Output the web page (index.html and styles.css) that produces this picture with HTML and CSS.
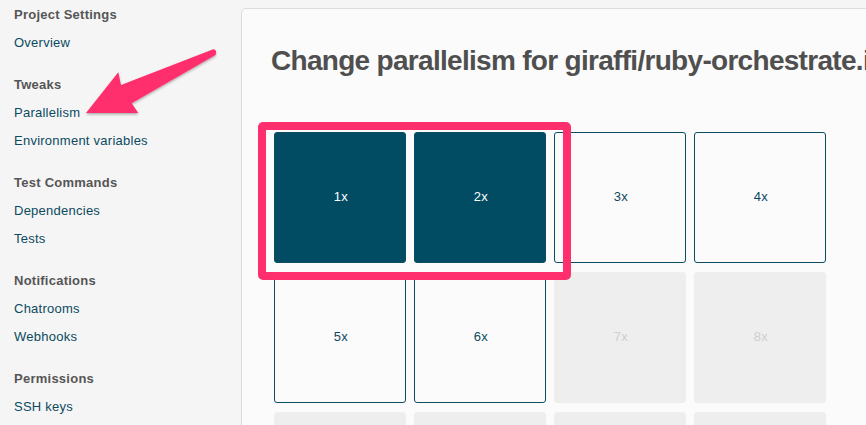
FILE: index.html
```html
<!DOCTYPE html>
<html>
<head>
<meta charset="utf-8">
<link rel="stylesheet" href="styles.css">
</head>
<body>
<div class="page">
  <nav class="sidebar">
    <div class="group">
      <div class="heading">Project Settings</div>
      <a class="link">Overview</a>
    </div>
    <div class="group">
      <div class="heading">Tweaks</div>
      <a class="link">Parallelism</a>
      <a class="link">Environment variables</a>
    </div>
    <div class="group">
      <div class="heading">Test Commands</div>
      <a class="link">Dependencies</a>
      <a class="link">Tests</a>
    </div>
    <div class="group">
      <div class="heading">Notifications</div>
      <a class="link">Chatrooms</a>
      <a class="link">Webhooks</a>
    </div>
    <div class="group">
      <div class="heading">Permissions</div>
      <a class="link">SSH keys</a>
    </div>
  </nav>
  <main class="main">
    <section class="panel">
      <h1 class="title">Change parallelism for giraffi/ruby-orchestrate.io</h1>
      <div class="grid">
        <div class="tile active">1x</div>
        <div class="tile active">2x</div>
        <div class="tile">3x</div>
        <div class="tile">4x</div>
        <div class="tile">5x</div>
        <div class="tile">6x</div>
        <div class="tile disabled">7x</div>
        <div class="tile disabled">8x</div>
        <div class="tile disabled">9x</div>
        <div class="tile disabled">10x</div>
        <div class="tile disabled">11x</div>
        <div class="tile disabled">12x</div>
      </div>
      <div class="highlight"></div>
    </section>
  </main>
</div>
<svg class="arrow" width="240" height="130" viewBox="0 0 240 130">
  <defs>
    <filter id="sh" x="-10%" y="-10%" width="120%" height="130%">
      <feDropShadow dx="0" dy="1.5" stdDeviation="1.2" flood-color="#000" flood-opacity="0.3"/>
    </filter>
  </defs>
  <path filter="url(#sh)" fill="#ff2f6d" d="M86 113 L118.3 72.3 L121 85 L213.3 49.3 Q217.5 50 215.5 55 L131.7 103.3 L138.3 113 Z"/>
</svg>
</body>
</html>
```
FILE: styles.css
```css
html, body {
  margin: 0;
  padding: 0;
  background: #f5f5f5;
  overflow: hidden;
  width: 866px;
  height: 425px;
}
.page {
  display: flex;
  font-family: "Liberation Sans", Arial, sans-serif;
}
.sidebar {
  width: 241px;
  flex: none;
  padding: 1px 0 0 14px;
  box-sizing: border-box;
}
.group {
  display: flex;
  flex-direction: column;
  margin-bottom: 14px;
}
.heading, .link {
  height: 28px;
  line-height: 28px;
  font-size: 13px;
  letter-spacing: 0.25px;
}
.heading {
  font-weight: bold;
  color: #555;
}
.link {
  color: #0b4a5f;
}
.main {
  flex: none;
  padding-top: 8px;
  width: 700px;
}
.panel {
  position: relative;
  background: #fbfbfb;
  border: 1px solid #dcdcdc;
  border-radius: 5px;
  height: 600px;
  padding: 0 0 0 29px;
  box-sizing: border-box;
}
.title {
  margin: 36px 0 0 0;
  font-size: 28px;
  line-height: 32px;
  font-weight: bold;
  letter-spacing: -0.7px;
  color: #4f4f4f;
  white-space: nowrap;
}
.grid {
  display: grid;
  grid-template-columns: repeat(4, 132px);
  grid-auto-rows: 131px;
  column-gap: 8px;
  row-gap: 9px;
  margin: 55px 0 0 3px;
}
.tile {
  box-sizing: border-box;
  border: 1px solid #0a4d63;
  border-radius: 3px;
  display: flex;
  align-items: center;
  justify-content: center;
  font-size: 13px;
  letter-spacing: 0.3px;
  padding: 0 0 2px 2px;
  color: #0a4a60;
  background: #fbfbfb;
}
.tile.active {
  background: #024c63;
  color: #fff;
}
.tile.disabled {
  background: #eeeeee;
  border-color: #eeeeee;
  color: #cfcfcf;
}
.highlight {
  position: absolute;
  left: 16px;
  top: 113px;
  width: 313px;
  height: 158px;
  box-sizing: border-box;
  border: 8px solid #ff2f6d;
  border-radius: 5px;
}
.arrow {
  position: absolute;
  left: 0;
  top: 0;
}
```
